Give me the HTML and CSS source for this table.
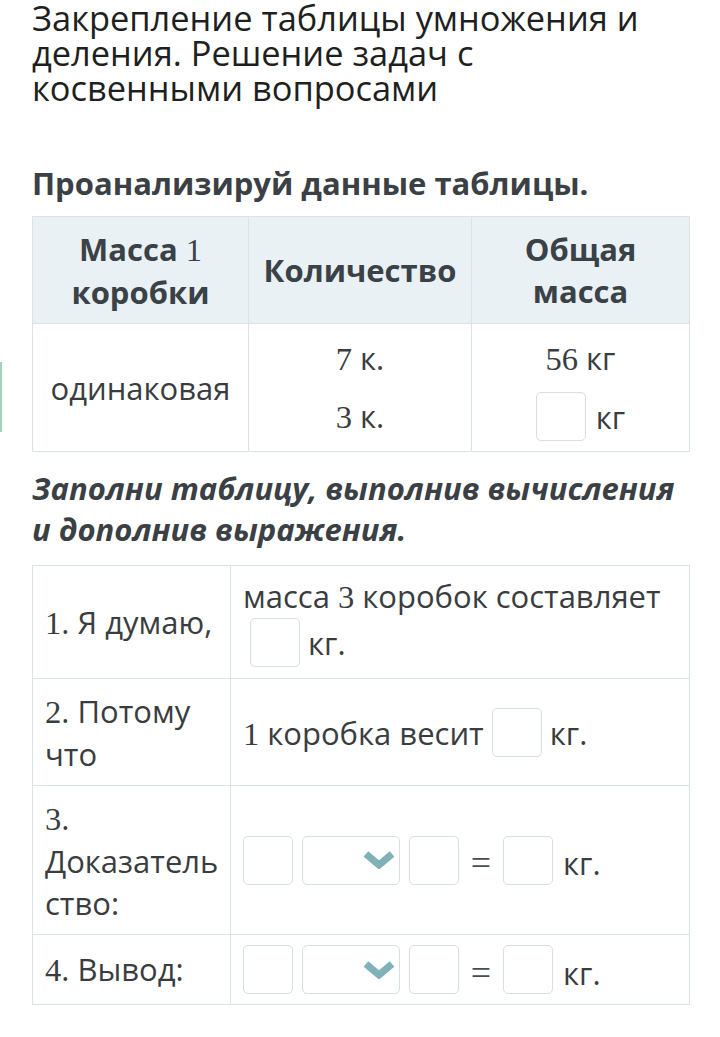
FILE: index.html
```html
<!DOCTYPE html>
<html lang="ru">
<head>
<meta charset="utf-8">
<title>Закрепление таблицы умножения и деления</title>
<link rel="stylesheet" href="styles.css">
</head>
<body>
<div class="side-mark"></div>
<main class="page">
  <h1 class="title">Закрепление таблицы умножения и деления. Решение задач с косвенными вопросами</h1>

  <h2 class="task">Проанализируй данные таблицы.</h2>

  <table class="data">
    <thead>
      <tr>
        <th class="c1">Масса <span class="num">1</span><br>коробки</th>
        <th class="c2">Количество</th>
        <th class="c3">Общая<br>масса</th>
      </tr>
    </thead>
    <tbody>
      <tr>
        <td class="mid">одинаковая</td>
        <td>
          <div class="stack">
            <div class="item"><span class="num">7</span> к.</div>
            <div class="item"><span class="num">3</span> к.</div>
          </div>
        </td>
        <td>
          <div class="stack">
            <div class="item"><span class="num">56</span> кг</div>
            <div class="item"><span class="box"></span> кг</div>
          </div>
        </td>
      </tr>
    </tbody>
  </table>

  <h2 class="task italic">Заполни таблицу, выполнив вычисления и дополнив выражения.</h2>

  <table class="steps">
    <tbody>
      <tr class="r1">
        <td class="label"><span class="num">1</span>. Я думаю,</td>
        <td class="fill top">масса <span class="num">3</span> коробок составляет <span class="box shift"></span> кг.</td>
      </tr>
      <tr class="r2">
        <td class="label"><span class="num">2</span>. Потому что</td>
        <td class="fill"><span class="num">1</span> коробка весит <span class="box"></span> кг.</td>
      </tr>
      <tr class="r3">
        <td class="label"><span class="num">3</span>. Доказатель<wbr>ство:</td>
        <td class="fill">
          <div class="expr">
            <span class="box"></span>
            <span class="select"><svg viewBox="0 0 30 18" width="30" height="18"><polyline points="2,3 15,14 28,3" fill="none" stroke="#7fb1b6" stroke-width="7"/></svg></span>
            <span class="box"></span>
            <span class="eq">=</span>
            <span class="box"></span>
            <span class="unit">кг.</span>
          </div>
        </td>
      </tr>
      <tr class="r4">
        <td class="label"><span class="num">4</span>. Вывод:</td>
        <td class="fill">
          <div class="expr">
            <span class="box"></span>
            <span class="select"><svg viewBox="0 0 30 18" width="30" height="18"><polyline points="2,3 15,14 28,3" fill="none" stroke="#7fb1b6" stroke-width="7"/></svg></span>
            <span class="box"></span>
            <span class="eq">=</span>
            <span class="box"></span>
            <span class="unit">кг.</span>
          </div>
        </td>
      </tr>
    </tbody>
  </table>
</main>
</body>
</html>
```

FILE: styles.css
```css
* { box-sizing: border-box; }

html, body {
  margin: 0;
  padding: 0;
  background: #ffffff;
}

body {
  font-family: "Open Sans", "Noto Sans", sans-serif;
  color: #3a3d40;
  position: relative;
}

.side-mark {
  position: absolute;
  left: 0;
  top: 362px;
  width: 2px;
  height: 70px;
  background: #9fd3bc;
}

.page {
  padding: 0 30px 0 32px;
}

.title {
  margin: 0;
  font-weight: 400;
  font-size: 34.4px;
  line-height: 35px;
  color: #1e1f20;
  padding-right: 10px;
}

.task {
  margin: 58px 0 13px;
  font-size: 31px;
  line-height: 40px;
  font-weight: 700;
  color: #3b4045;
}

.task.italic {
  margin: 16px 0 15px;
  font-style: italic;
  line-height: 41px;
}

.num {
  font-family: "Liberation Serif", "DejaVu Serif", serif;
  font-weight: 400;
  font-size: 1.05em;
}

table {
  border-collapse: collapse;
  width: 100%;
  table-layout: fixed;
}

.data th,
.data td,
.steps td {
  border: 1px solid #dbe3e5;
}

.data th {
  background: #e9f1f4;
  font-size: 31px;
  line-height: 42px;
  font-weight: 700;
  color: #3a4147;
  height: 107px;
  padding: 0 6px;
  text-align: center;
  vertical-align: middle;
}

.data .c1 { width: 216px; }
.data .c2 { width: 223px; }

.data td {
  font-size: 31px;
  height: 127px;
  padding: 10px 6px;
  text-align: center;
  vertical-align: middle;
  color: #3a3d40;
}

.stack {
  display: flex;
  flex-direction: column;
  gap: 9px;
}

.item {
  height: 49px;
  line-height: 49px;
}

.box {
  display: inline-block;
  width: 50px;
  height: 49px;
  border: 1px solid #d8dfe0;
  border-radius: 5px;
  background: #fff;
  vertical-align: -12px;
}

.data .item .box { margin-right: 2px; }

.steps td {
  font-size: 31px;
  line-height: 42px;
  vertical-align: middle;
  color: #3a3d40;
}

.steps .label {
  width: 198px;
  padding: 0 10px 0 12px;
}

.steps .fill {
  padding: 0 12px;
}

.steps .top { padding-top: 9px; padding-bottom: 0; vertical-align: top; }

.box.shift { margin-left: 7px; }

.r1 td { height: 113px; }
.r2 td { height: 107px; }
.r3 td { height: 149px; }
.r4 td { height: 70px; }

.expr {
  display: flex;
  align-items: center;
  gap: 9px;
}

.select {
  width: 98px;
  height: 49px;
  border: 1px solid #d8dfe0;
  border-radius: 5px;
  display: flex;
  align-items: center;
  justify-content: flex-end;
  padding-right: 5px;
}

.eq {
  font-family: "Liberation Serif", "DejaVu Serif", serif;
  font-size: 36px;
  line-height: 1;
  width: 26px;
  text-align: center;
  margin-top: 6px;
  color: #4a4d50;
}

.unit {
  margin-top: 6px;
  margin-left: 1px;
}
```
